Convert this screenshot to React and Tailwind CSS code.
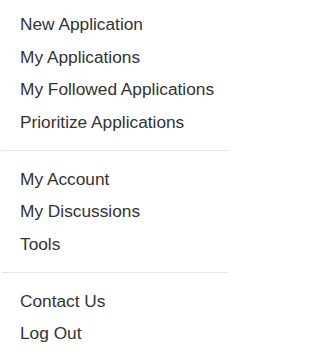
const groups = [
  ["New Application", "My Applications", "My Followed Applications", "Prioritize Applications"],
  ["My Account", "My Discussions", "Tools"],
  ["Contact Us", "Log Out"],
];

export default function App() {
  return (
    <div className="min-h-screen bg-white pt-[8px] font-['Liberation_Sans',Arial,sans-serif] text-[17.3px] text-[#333333]">
      <div className="w-[228px]">
        {groups.map((items, i) => (
          <div key={i}>
            {i > 0 && <div className="mt-[11.5px] mb-[12px] ml-[2px] h-px bg-[#e5e5e5]" />}
            <ul>
              {items.map((label) => (
                <li key={label}>
                  <a href="#" className="block h-[32.5px] pl-[20px] leading-[32.5px] hover:bg-gray-100">
                    {label}
                  </a>
                </li>
              ))}
            </ul>
          </div>
        ))}
      </div>
    </div>
  );
}
